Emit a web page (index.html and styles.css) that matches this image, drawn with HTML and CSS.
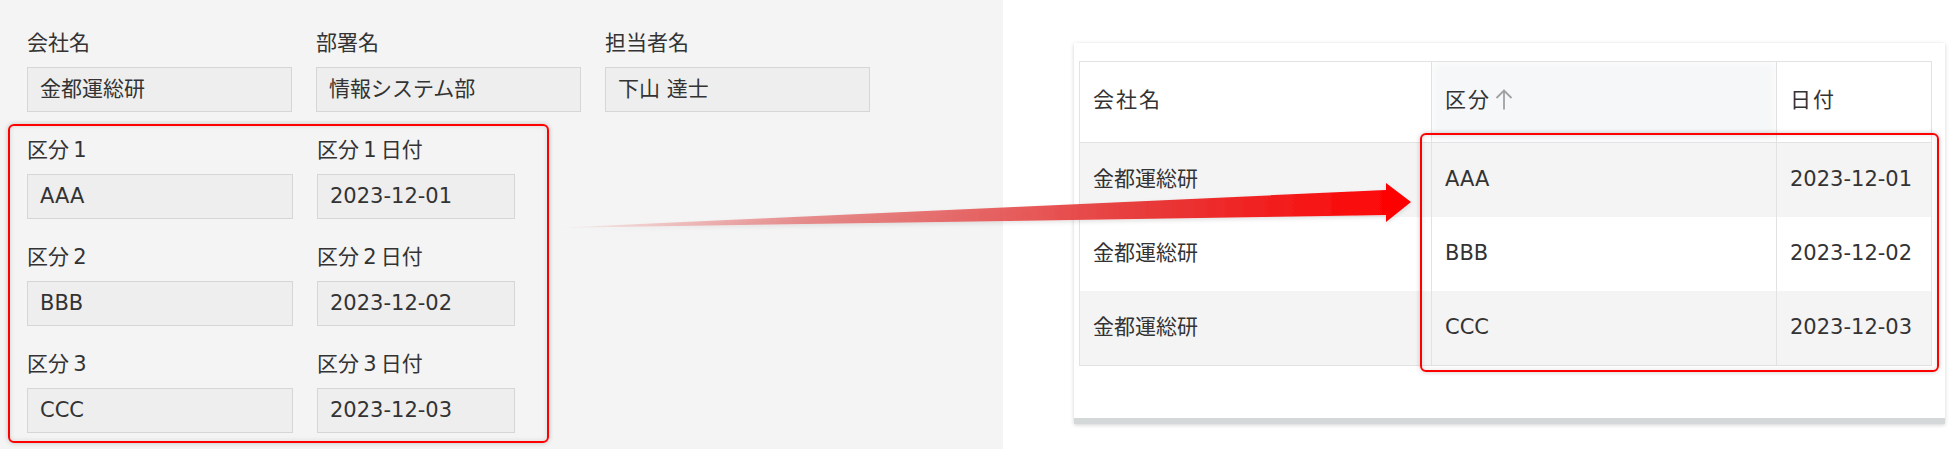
FILE: index.html
```html
<!DOCTYPE html>
<html lang="ja">
<head>
    <meta charset="UTF-8">
    <title>区分の表示</title>
    <link rel="stylesheet" href="styles.css">
</head>
<body>
    <div class="page">
        <div class="form-panel">
            <div class="row">
                <div class="field wide">
                    <div class="label">会社名</div>
                    <div class="value">金都運総研</div>
                </div>
                <div class="field wide">
                    <div class="label">部署名</div>
                    <div class="value">情報システム部</div>
                </div>
                <div class="field wide">
                    <div class="label">担当者名</div>
                    <div class="value">下山 達士</div>
                </div>
            </div>
            <div class="group">
                <div class="row">
                    <div class="field first">
                        <div class="label">区分&#8201;1</div>
                        <div class="value">AAA</div>
                    </div>
                    <div class="field date">
                        <div class="label">区分&#8201;1&#8201;日付</div>
                        <div class="value">2023-12-01</div>
                    </div>
                </div>
                <div class="row">
                    <div class="field first">
                        <div class="label">区分&#8201;2</div>
                        <div class="value">BBB</div>
                    </div>
                    <div class="field date">
                        <div class="label">区分&#8201;2&#8201;日付</div>
                        <div class="value">2023-12-02</div>
                    </div>
                </div>
                <div class="row">
                    <div class="field first">
                        <div class="label">区分&#8201;3</div>
                        <div class="value">CCC</div>
                    </div>
                    <div class="field date">
                        <div class="label">区分&#8201;3&#8201;日付</div>
                        <div class="value">2023-12-03</div>
                    </div>
                </div>
            </div>
        </div>

        <div class="list-area">
            <div class="card">
                <table class="grid">
                    <thead>
                        <tr>
                            <th class="c1">会社名</th>
                            <th class="c2 sorted">区分<svg class="sort" width="18" height="21" viewBox="0 0 18 21"><path d="M9 1.5V20.5M1.5 9L9 1.5L16.5 9" fill="none" stroke="#a0a0a0" stroke-width="1.8"/></svg></th>
                            <th class="c3">日付</th>
                        </tr>
                    </thead>
                    <tbody>
                        <tr class="odd"><td>金都運総研</td><td>AAA</td><td>2023-12-01</td></tr>
                        <tr><td>金都運総研</td><td>BBB</td><td>2023-12-02</td></tr>
                        <tr class="odd"><td>金都運総研</td><td>CCC</td><td>2023-12-03</td></tr>
                    </tbody>
                </table>
            </div>
        </div>
    </div>

    <!-- annotation overlays -->
    <div class="mark-table"></div>
    <svg class="arrow" width="870" height="60" viewBox="0 0 870 60">
        <defs>
            <linearGradient id="fade" x1="0" y1="0" x2="1" y2="0">
                <stop offset="0" stop-color="#e85a5a" stop-opacity="0"/>
                <stop offset="0.3" stop-color="#e26a6a" stop-opacity="0.75"/>
                <stop offset="0.7" stop-color="#e83838"/>
                <stop offset="1" stop-color="#ff0000"/>
            </linearGradient>
            <filter id="soft" x="-5%" y="-50%" width="110%" height="200%">
                <feDropShadow dx="0" dy="2" stdDeviation="2" flood-color="#000" flood-opacity="0.12"/>
            </filter>
        </defs>
        <path d="M3 50 L836 12 L836 5 L861 24 L836 44 L836 37 Z" fill="url(#fade)" filter="url(#soft)"/>
    </svg>
</body>
</html>
```

FILE: styles.css
```css
body {
    margin: 0;
    background: #ffffff;
    font-family: "DejaVu Sans", "Noto Sans CJK JP", sans-serif;
    color: #333333;
    position: relative;
}
.page {
    display: flex;
    height: 449px;
}
.form-panel {
    width: 1003px;
    flex-shrink: 0;
    background: #f4f4f4;
    padding: 30px 0 0 27px;
    box-sizing: border-box;
}
.row {
    display: flex;
    gap: 24px;
}
.field .label {
    font-size: 21px;
    line-height: 26px;
    height: 26px;
    margin-bottom: 11px;
    white-space: nowrap;
}
.field .value {
    height: 45px;
    box-sizing: border-box;
    background: #eeeeee;
    border: 1px solid #d6d6d6;
    padding-left: 12px;
    font-size: 21px;
    line-height: 42px;
    white-space: nowrap;
}
.wide { width: 265px; }
.first { width: 266px; }
.date { width: 198px; }

.group {
    margin: 12px 0 0 -19px;
    width: fit-content;
    border: 2px solid #ff0000;
    border-radius: 6px;
    padding: 11px 32px 8px 17px;
    display: flex;
    flex-direction: column;
    gap: 25px;
    box-shadow: 0 0 5px rgba(0, 0, 0, 0.22), inset 0 0 5px rgba(0, 0, 0, 0.12);
}

.list-area {
    padding: 43px 0 0 71px;
}
.card {
    width: 871px;
    height: 381px;
    box-sizing: border-box;
    background: #ffffff;
    padding: 18px 13px 0 5px;
    border-bottom: 6px solid #d4d8d9;
    box-shadow: 0 1px 4px rgba(0, 0, 0, 0.18);
}
.grid {
    width: 853px;
    border-collapse: collapse;
    font-size: 21px;
    line-height: 24px;
    border: 1px solid #e2e2e2;
}
.grid th,
.grid td {
    text-align: left;
    font-weight: normal;
    padding: 0 0 0 13px;
    white-space: nowrap;
    vertical-align: middle;
}
.grid th {
    height: 76px;
    padding-bottom: 4px;
    border-bottom: 1px solid #e2e2e2;
    letter-spacing: 2px;
}
.grid td {
    height: 72px;
    padding-bottom: 2px;
}
.grid th + th,
.grid td + td {
    border-left: 1px solid #e2e2e2;
}
.grid .c1 { width: 338px; }
.grid .c2 { width: 331px; }
.grid .sorted {
    background: #f6f7f8;
    box-shadow: inset 0 0 10px rgba(255, 255, 255, 0.9);
}
.sort {
    vertical-align: -3px;
    margin-left: 4px;
}
.grid tr.odd td {
    background: #f4f4f4;
}

.mark-table {
    position: absolute;
    left: 1420px;
    top: 133px;
    width: 519px;
    height: 239px;
    box-sizing: border-box;
    border: 2px solid #ff0000;
    border-radius: 6px;
    box-shadow: 0 0 5px rgba(0, 0, 0, 0.22), inset 0 0 5px rgba(0, 0, 0, 0.12);
}
.arrow {
    position: absolute;
    left: 550px;
    top: 178px;
}
```
